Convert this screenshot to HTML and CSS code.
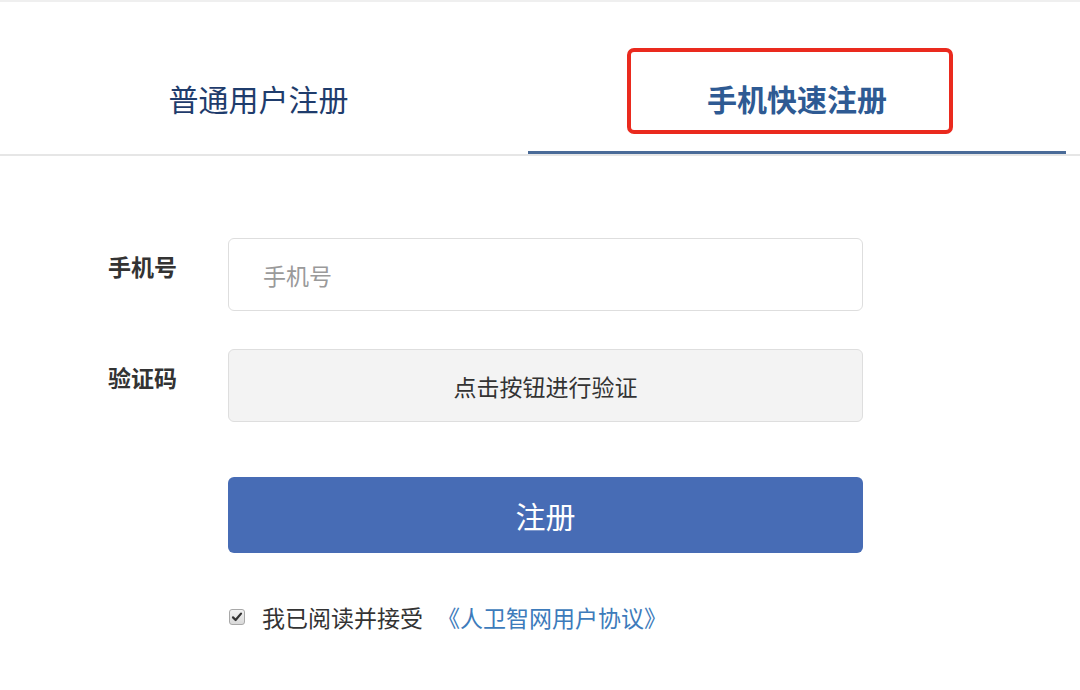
FILE: index.html
```html
<!DOCTYPE html>
<html lang="zh-CN">
<head>
    <meta charset="UTF-8">
    <meta name="viewport" content="width=device-width, initial-scale=1.0">
    <title>手机快速注册</title>
    <link rel="stylesheet" href="styles.css">
</head>
<body>
    <div class="page">
        <div class="tabs">
            <div class="tab">普通用户注册</div>
            <div class="tab active">
                手机快速注册
                <span class="mark"></span>
            </div>
        </div>

        <form class="register-form">
            <div class="form-row">
                <label class="form-label" for="phone">手机号</label>
                <input class="form-input" id="phone" type="text" placeholder="手机号">
            </div>
            <div class="form-row">
                <span class="form-label">验证码</span>
                <div class="verify-box">点击按钮进行验证</div>
            </div>
            <div class="form-row submit-row">
                <button class="btn-submit" type="button">注册</button>
            </div>
            <div class="form-row agree-row">
                <span class="check">
                    <svg width="12" height="12" viewBox="0 0 12 12">
                        <path d="M2 6.4 L4.6 9 L10 2.6" fill="none" stroke="#333" stroke-width="2.2" stroke-linecap="round" stroke-linejoin="round"/>
                    </svg>
                </span>
                <span class="agree-text">我已阅读并接受</span>
                <a class="agree-link" href="#">《人卫智网用户协议》</a>
            </div>
        </form>
    </div>
</body>
</html>
```

FILE: styles.css
```css
body {
    margin: 0;
    padding: 0;
    background: #fff;
    font-family: "Noto Sans CJK SC", "Noto Sans", sans-serif;
    color: #333;
}

.page {
    width: 1080px;
}

.tabs {
    display: flex;
    border-top: 2px solid #efefef;
    border-bottom: 2px solid #e6e6e6;
}

.tab {
    box-sizing: border-box;
    height: 152px;
    padding-top: 76px;
    padding-right: 11px;
    width: 528px;
    text-align: center;
    font-size: 30px;
    line-height: 40px;
    color: #1f3c6c;
    border-bottom: 3px solid transparent;
}

.tab.active {
    position: relative;
    width: 538px;
    padding-right: 0;
    font-weight: bold;
    color: #2e5a93;
    border-bottom-color: #4a6b98;
}

.mark {
    position: absolute;
    left: 99px;
    top: 46px;
    width: 326px;
    height: 86px;
    box-sizing: border-box;
    border: 4px solid #ea2a1e;
    border-radius: 7px;
}

.register-form {
    padding: 82px 0 0 108px;
}

.form-row {
    display: flex;
    align-items: flex-start;
    margin-bottom: 38px;
}

.form-label {
    width: 120px;
    padding-top: 13px;
    font-size: 23px;
    line-height: 30px;
    font-weight: bold;
    color: #333;
}

.form-input,
.verify-box {
    box-sizing: border-box;
    width: 635px;
    height: 73px;
    border: 1px solid #dedede;
    border-radius: 6px;
    font-family: inherit;
    font-size: 23px;
}

.form-input {
    padding: 0 34px;
    color: #333;
    outline: none;
}

.form-input::placeholder {
    color: #9a9a9a;
}

.verify-box {
    display: flex;
    align-items: center;
    justify-content: center;
    background: #f3f3f3;
    color: #333;
}

.submit-row {
    margin-top: 55px;
    margin-bottom: 48px;
    padding-left: 120px;
}

.btn-submit {
    width: 635px;
    height: 76px;
    border: none;
    border-radius: 6px;
    background: #476cb5;
    color: #fff;
    font-family: inherit;
    font-size: 30px;
    cursor: pointer;
}

.agree-row {
    align-items: center;
    padding-left: 121px;
    font-size: 23px;
    line-height: 32px;
}

.check {
    display: flex;
    align-items: center;
    justify-content: center;
    box-sizing: border-box;
    width: 16px;
    height: 16px;
    margin-right: 17px;
    border: 1px solid #a8a8a8;
    border-radius: 3px;
    background: linear-gradient(#f2f2f2, #d9d9d9);
}

.agree-text {
    color: #333;
}

.agree-link {
    margin-left: 14px;
    color: #3d7bbb;
    text-decoration: none;
}
```
